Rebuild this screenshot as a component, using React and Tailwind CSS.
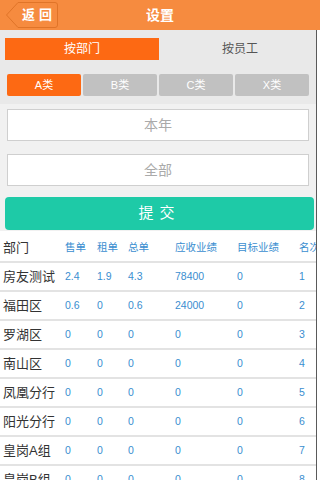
const rows = [
  ['房友测试', '2.4', '1.9', '4.3', '78400', '0', '1'],
  ['福田区', '0.6', '0', '0.6', '24000', '0', '2'],
  ['罗湖区', '0', '0', '0', '0', '0', '3'],
  ['南山区', '0', '0', '0', '0', '0', '4'],
  ['凤凰分行', '0', '0', '0', '0', '0', '5'],
  ['阳光分行', '0', '0', '0', '0', '0', '6'],
  ['皇岗A组', '0', '0', '0', '0', '0', '7'],
  ['皇岗B组', '0', '0', '0', '0', '0', '8'],
];

const heads = ['售单', '租单', '总单', '应收业绩', '目标业绩', '名次'];
const widths = ['w-[32px]', 'w-[31px]', 'w-[47px]', 'w-[62px]', 'w-[62px]', 'w-[40px]'];

const BackButton = () => (
  <button className="absolute left-[5px] top-[1px] w-[54px] h-[28px] flex items-center justify-start">
    <svg className="absolute inset-0" width="54" height="28" viewBox="0 0 54 28">
      <path d="M1.5 14 L13 1.5 H50 Q52.5 1.5 52.5 4 V24 Q52.5 26.5 50 26.5 H13 Z" fill="none" stroke="#e07428" strokeWidth="1" />
    </svg>
    <span className="relative pl-[17px] text-white text-[13px] tracking-[4px] font-semibold">返回</span>
  </button>
);

const App = () => {
  return (
    <div className="w-[320px] h-[480px] overflow-hidden bg-white font-['Liberation_Sans','Noto_Sans_CJK_SC',sans-serif]">
      <header className="relative h-[30px] bg-[#f68b3f] flex items-center justify-center">
        <BackButton />
        <h1 className="text-white text-[14px] font-bold">设置</h1>
      </header>

      <div className="flex">
        <div className="w-[317px] border-r border-[#5a5a5a]">
          {/* filters */}
          <div className="bg-[#e9e9e9] pt-[8px] pb-[8px]">
            <div className="flex px-[5px]">
              <button className="w-[154px] h-[22px] bg-[#fd6913] text-white text-[12px]">按部门</button>
              <button className="flex-1 h-[22px] pl-[10px] text-[#555] text-[12px]">按员工</button>
            </div>
            <div className="flex gap-[2px] px-[7px] mt-[14px]">
              <button className="w-[75px] h-[22px] rounded-[2px] bg-[#fd6913] text-white text-[11px]">A类</button>
              <button className="w-[75px] h-[22px] rounded-[2px] bg-[#c1c1c1] text-white text-[11px]">B类</button>
              <button className="w-[75px] h-[22px] rounded-[2px] bg-[#c1c1c1] text-white text-[11px]">C类</button>
              <button className="w-[75px] h-[22px] rounded-[2px] bg-[#c1c1c1] text-white text-[11px]">X类</button>
            </div>
          </div>

          <div className="bg-[#f1f1f1] pt-[5px] pb-[1px]">
            <div className="mx-[7px] h-[32px] bg-white border border-[#cfcfcf] flex items-center justify-center text-[14px] text-[#aaa]">本年</div>
            <div className="mx-[7px] mt-[13px] h-[32px] bg-white border border-[#cfcfcf] flex items-center justify-center text-[14px] text-[#aaa]">全部</div>
            <button className="mx-[5px] mt-[11px] w-[309px] h-[33px] rounded-[4px] bg-[#1ecaa7] text-white text-[15px] tracking-[6px]">提交</button>
          </div>

          {/* table */}
          <div className="overflow-hidden">
            <div className="flex items-center h-[32px] pt-[4px] border-b-2 border-[#e3e3e3] w-[400px]">
              <div className="w-[65px] pl-[3px] text-[13px] text-[#333]">部门</div>
              {heads.map((h, i) => (
                <div key={h} className={`${widths[i]} shrink-0 text-[10.5px] text-[#3a8ed0]`}>{h}</div>
              ))}
            </div>
            {rows.map((r) => (
              <div key={r[0]} className="flex items-center h-[29px] border-b-2 border-[#e3e3e3] w-[400px]">
                <div className="w-[65px] pl-[3px] text-[13px] text-[#333] whitespace-nowrap">{r[0]}</div>
                {r.slice(1).map((v, i) => (
                  <div key={i} className={`${widths[i]} shrink-0 text-[10.5px] text-[#3a8ed0]`}>{v}</div>
                ))}
              </div>
            ))}
          </div>
        </div>
      </div>
    </div>
  );
};

export default App;
